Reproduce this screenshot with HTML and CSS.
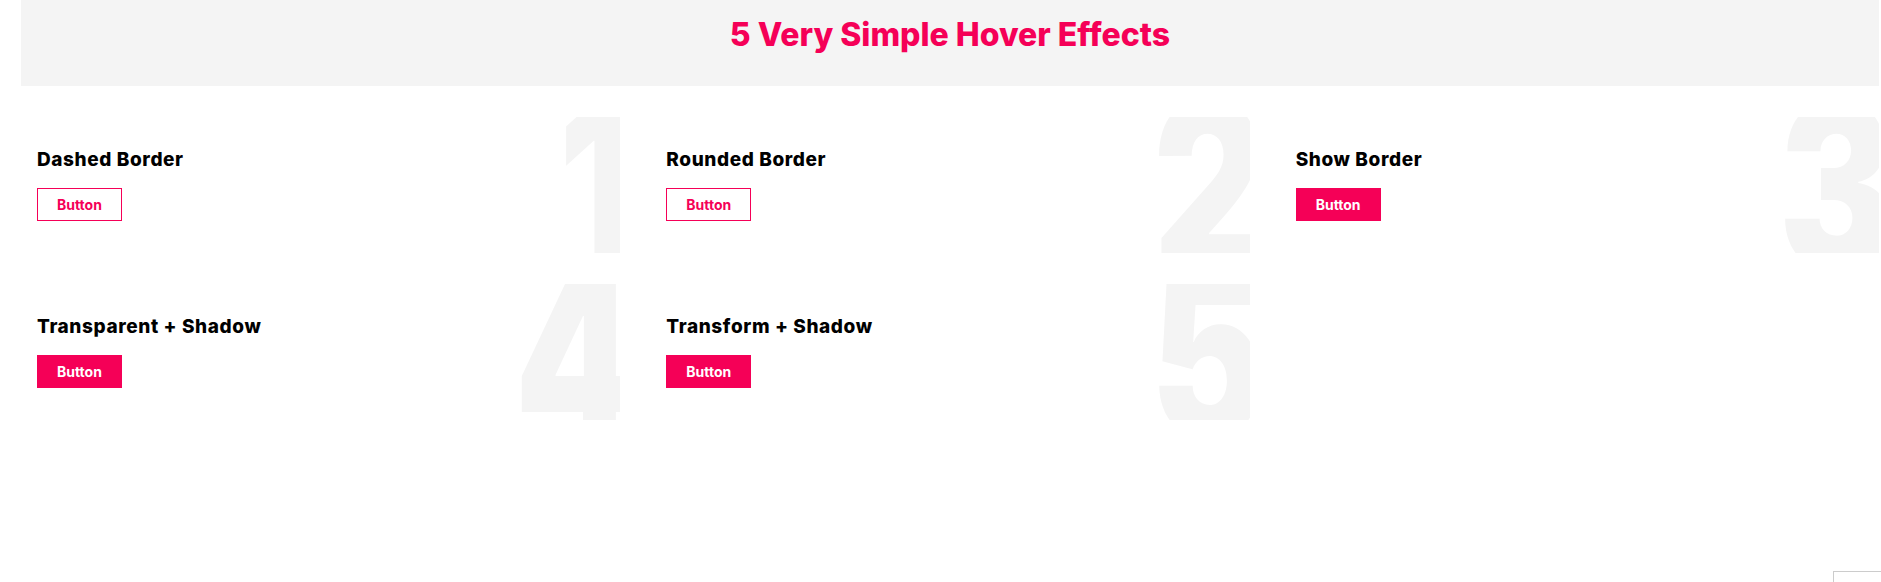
FILE: index.html
```html
<!doctype html>
<html lang="en">
<head>
    <meta charset="UTF-8">
    <meta name="viewport" content="width=device-width, initial-scale=1.0">
    <title>5 Very Simple Hover Effects</title>
    <link rel="stylesheet" href="styles.css">
</head>
<body>
<!--标题-->
<header class="top">
    <h1 class="title">5 Very Simple Hover Effects</h1>
</header>

<!--五个按钮-->
<div class="grid">
    <div class="card" data-num="1">
        <h3 class="card-title">Dashed Border</h3>
        <a href="#" class="btn btn-line btn-dashed">Button</a>
    </div>
    <div class="card" data-num="2">
        <h3 class="card-title">Rounded Border</h3>
        <a href="#" class="btn btn-line btn-round">Button</a>
    </div>
    <div class="card" data-num="3">
        <h3 class="card-title">Show Border</h3>
        <a href="#" class="btn btn-fill btn-border">Button</a>
    </div>
    <div class="card" data-num="4">
        <h3 class="card-title">Transparent + Shadow</h3>
        <a href="#" class="btn btn-fill btn-fade">Button</a>
    </div>
    <div class="card" data-num="5">
        <h3 class="card-title">Transform + Shadow</h3>
        <a href="#" class="btn btn-fill btn-lift">Button</a>
    </div>
</div>

<div class="corner-box"></div>
</body>
</html>
```

FILE: styles.css
```css
*{
    margin: 0;
    padding: 0;
    box-sizing: border-box;
}
body{
    font-family: Inter, "Noto Sans", sans-serif;
    background: #fff;
    padding: 0 2px 0 21px;
}
.top{
    height: 86px;
    padding-top: 15px;
    background: #f4f4f4;
    text-align: center;
}
.title{
    font-size: 32px;
    line-height: 40px;
    font-weight: 800;
    color: #f50057;
}
.grid{
    display: grid;
    grid-template-columns: repeat(3, 1fr);
    gap: 31px 30px;
    margin-top: 31px;
}
.card{
    position: relative;
    z-index: 0;
    overflow: hidden;
    height: 136px;
    padding: 31px 16px 0;
    display: flex;
    flex-direction: column;
    align-items: flex-start;
    gap: 16px;
}
/* 大号背景数字 */
.card::after{
    content: attr(data-num);
    position: absolute;
    top: -48px;
    right: -16px;
    z-index: -1;
    font-size: 234px;
    line-height: 234px;
    font-weight: 900;
    color: #f4f4f4;
    transform: scaleX(.74);
    transform-origin: right;
}
.card-title{
    font-size: 19px;
    line-height: 24px;
    font-weight: 800;
    letter-spacing: .6px;
    color: #000;
}
.btn{
    display: block;
    height: 33px;
    line-height: 31px;
    padding: 0 19px;
    border: 1px solid #f50057;
    font-size: 14px;
    font-weight: 700;
    text-decoration: none;
    transition: all .3s;
}
.btn-line{
    background: #fff;
    color: #f50057;
}
.btn-fill{
    background: #f50057;
    color: #fff;
}
.btn-dashed:hover{
    border-style: dashed;
}
.btn-round:hover{
    border-radius: 17px;
}
.btn-border:hover{
    background: #fff;
    color: #f50057;
}
.btn-fade:hover{
    opacity: .8;
    box-shadow: 0 5px 12px rgba(0,0,0,.25);
}
.btn-lift:hover{
    transform: translateY(-3px);
    box-shadow: 0 5px 12px rgba(0,0,0,.25);
}
.corner-box{
    position: fixed;
    right: -20px;
    bottom: -30px;
    width: 68px;
    height: 41px;
    border: 1px solid #ccc;
    background: #fff;
}
```
